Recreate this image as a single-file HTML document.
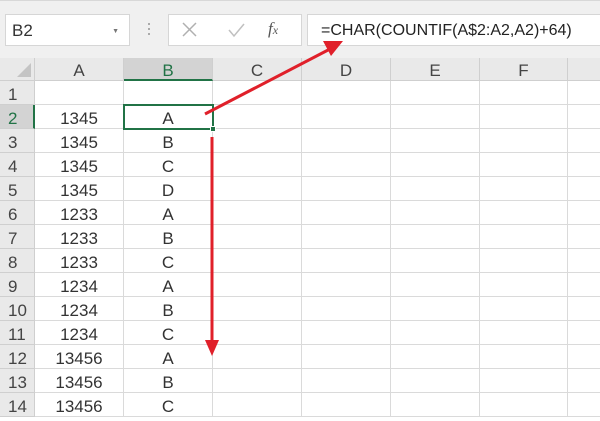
<!DOCTYPE html>
<html><head><meta charset="utf-8"><style>
*{margin:0;padding:0;box-sizing:border-box}
body{width:600px;height:418px;overflow:hidden;background:#fff;font-family:"Liberation Sans",sans-serif;position:relative;color:#333}
.tb{position:absolute;left:0;top:0;width:600px;height:58px;background:#f0f0f0;border-top:1px solid #d8d8d8}
.box{position:absolute;background:#fff;border:1px solid #d6d6d6}
.hdr{position:absolute;top:58px;height:23px;background:#e9e9e9;border-bottom:1px solid #cfcfcf;border-right:1px solid #cfcfcf;text-align:center;font-size:17px;line-height:26px;color:#444}
.rh{position:absolute;left:0;width:35px;height:24px;background:#e9e9e9;border-bottom:1px solid #cfcfcf;border-right:1px solid #cfcfcf;text-align:left;padding-left:8px;font-size:17px;line-height:28px;color:#444}
.c{position:absolute;height:24px;border-bottom:1px solid #dadada;border-right:1px solid #dadada;text-align:center;font-size:17px;line-height:28px}
</style></head><body>
<div class="tb"></div>
<div class="box" style="left:5px;top:14px;width:125px;height:32px;font-size:17px;line-height:31px;padding-left:6px">B2<span style="position:absolute;right:10px;top:1px;font-size:7px;color:#777">▼</span></div>
<div style="position:absolute;left:148px;top:23px;width:2px;height:2px;background:#aaa;box-shadow:0 5px #aaa,0 10px #aaa"></div>
<div class="box" style="left:168px;top:14px;width:134px;height:32px"></div>
<svg style="position:absolute;left:0;top:0" width="310" height="58">
<path d="M183 23 L196 36 M196 23 L183 36" stroke="#b0b0b0" stroke-width="1.5"/>
<path d="M229 30 L234 36 L244 24" stroke="#c0c0c0" stroke-width="1.5" fill="none"/>
</svg>
<div style="position:absolute;left:268px;top:14px;font-family:'Liberation Serif',serif;font-style:italic;font-size:17px;line-height:30px;color:#555">f<span style="font-size:12px">x</span></div>
<div class="box" style="left:307px;top:14px;width:300px;height:32px;font-size:16px;line-height:32px;padding-left:13px;color:#222">=CHAR(COUNTIF(A$2:A2,A2)+64)</div>

<div class="hdr" style="left:0;width:35px;background:#e9e9e9"><div style="position:absolute;right:3px;bottom:3px;width:0;height:0;border-left:14px solid transparent;border-bottom:14px solid #c4c4c4"></div></div>
<div class="hdr" style="left:35px;width:89px">A</div>
<div class="hdr" style="left:124px;width:89px;background:#d3d3d3;border-bottom:2px solid #217346;color:#217346">B</div>
<div class="hdr" style="left:213px;width:89px">C</div>
<div class="hdr" style="left:302px;width:89px">D</div>
<div class="hdr" style="left:391px;width:89px">E</div>
<div class="hdr" style="left:480px;width:88px">F</div>
<div class="hdr" style="left:568px;width:40px"></div>

<div id="g"></div>
<script>
var a=["","1345","1345","1345","1345","1233","1233","1233","1234","1234","1234","13456","13456","13456"];
var b=["","A","B","C","D","A","B","C","A","B","C","A","B","C"];
var h="";var xs=[[35,89],[124,89],[213,89],[302,89],[391,89],[480,88],[568,40]];
for(var i=0;i<14;i++){var y=81+i*24;
h+='<div class="rh" style="top:'+y+'px;'+(i==1?'background:#d3d3d3;color:#217346;border-right:2px solid #217346':'')+'">'+(i+1)+'</div>';
for(var j=0;j<7;j++){var t=j==0?a[i]:j==1?b[i]:"";h+='<div class="c" style="top:'+y+'px;left:'+xs[j][0]+'px;width:'+xs[j][1]+'px">'+t+'</div>';}}
document.getElementById('g').innerHTML=h;
</script>
<div style="position:absolute;left:123px;top:104px;width:91px;height:26px;border:2px solid #217346"></div>
<div style="position:absolute;left:210px;top:126px;width:6px;height:6px;background:#217346;border:1px solid #fff"></div>
<svg style="position:absolute;left:0;top:0" width="600" height="418">
<line x1="205" y1="114" x2="330" y2="49" stroke="#e0202a" stroke-width="3"/>
<polygon points="343,41 323,41 331,56" fill="#e0202a"/>
<line x1="212" y1="137" x2="212" y2="343" stroke="#e0202a" stroke-width="3"/>
<polygon points="205,340 219,340 212,356" fill="#e0202a"/>
</svg>
</body></html>
